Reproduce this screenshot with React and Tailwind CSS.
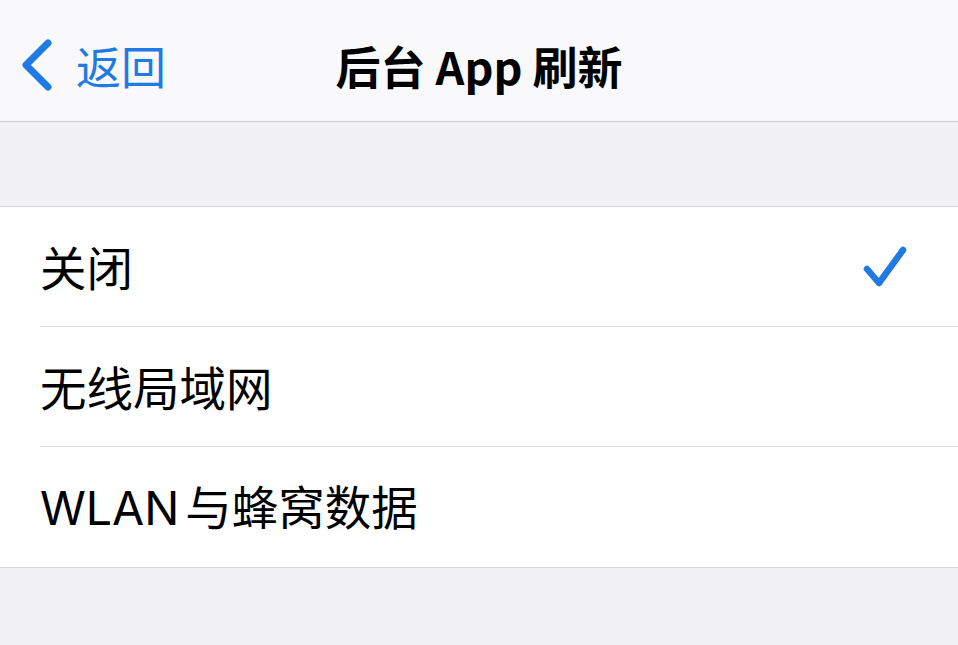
const rows = [
  { label: "关闭", checked: true },
  { label: "无线局域网", checked: false },
  { latin: "WLAN", label: "与蜂窝数据", checked: false },
];

const font = { fontFamily: '"Noto Sans CJK SC", "Noto Sans", sans-serif' };

export default function App() {
  return (
    <div className="w-[958px] h-[645px] bg-[#f0f0f5] overflow-hidden" style={font}>
      <header className="relative h-[122px] bg-[#f9f9fb] border-b border-[#c9c9ce] flex items-center justify-center">
        <button className="absolute left-[20px] top-[38px] flex items-center gap-[22px] text-[#1f7be3]">
          <svg width="34" height="54" viewBox="0 0 34 54" fill="none">
            <path d="M28 5 L6 27 L28 49" stroke="currentColor" strokeWidth="7" strokeLinecap="round" strokeLinejoin="round" />
          </svg>
          <span className="text-[45px] leading-none">返回</span>
        </button>
        <h1 className="text-[45px] leading-none font-bold text-black mt-[10px]">后台 App 刷新</h1>
      </header>

      <div className="h-[84px]" />

      <ul className="bg-white border-y border-[#d4d4d8]">
        {rows.map((row, i) => (
          <li key={row.label} className="pl-[40px]">
            <div className={`h-[120px] flex items-center justify-between pr-[52px] ${i < rows.length - 1 ? "border-b border-[#dadade]" : ""}`}>
              <span className="text-[46.5px] leading-none text-black">
                {row.latin && (
                  <span className="mr-[6px] font-['Inter',sans-serif] font-normal">{row.latin}</span>
                )}
                {row.label}
              </span>
              {row.checked && (
                <svg width="46" height="44" viewBox="0 0 46 44" fill="none" className="text-[#1f7be3] mr-[-2px]">
                  <path d="M5 24 L17 38 L41 5" stroke="currentColor" strokeWidth="6.5" strokeLinecap="round" strokeLinejoin="round" />
                </svg>
              )}
            </div>
          </li>
        ))}
      </ul>
    </div>
  );
}
